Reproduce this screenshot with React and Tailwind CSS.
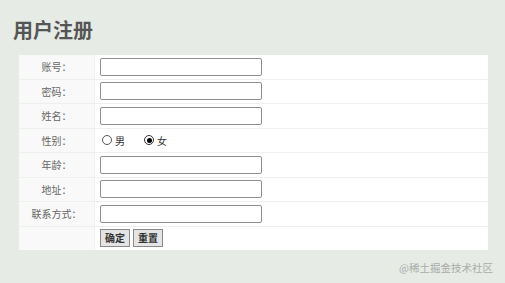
export default function App() {
  const fields = [
    { label: '账号：', type: 'text' },
    { label: '密码：', type: 'password' },
    { label: '姓名：', type: 'text' },
    { label: '性别：', type: 'radio' },
    { label: '年龄：', type: 'text' },
    { label: '地址：', type: 'text' },
    { label: '联系方式：', type: 'text' },
  ];

  return (
    <div
      className="w-[505px] h-[283px] bg-[#e6ebe5] relative overflow-hidden"
      style={{ fontFamily: '"Noto Sans CJK SC", "Noto Sans", sans-serif' }}
    >
      <h1 className="pl-[13px] pt-[17px] text-[20px] leading-[26px] font-bold text-[#555]">用户注册</h1>

      <div className="ml-[19px] mt-[12px] w-[469px] grid grid-cols-[75px_1fr] gap-[1px] bg-[#eef0ee]">
        {fields.map((f, i) => (
          <div key={i} className="contents">
            <div className="h-[23.5px] bg-[#f8f9f8] flex items-center justify-center text-[10px] text-[#666]">
              {f.label}
            </div>
            <div className="h-[23.5px] bg-white flex items-center pl-[5px]">
              {f.type === 'radio' ? (
                <div className="flex items-center text-[10px] text-[#333]">
                  <span className="w-[10px] h-[10px] rounded-full border border-[#555] bg-white ml-[2px]" />
                  <span className="ml-[3px]">男</span>
                  <span className="w-[10px] h-[10px] rounded-full border border-[#333] bg-white ml-[19px] flex items-center justify-center">
                    <span className="w-[5px] h-[5px] rounded-full bg-black" />
                  </span>
                  <span className="ml-[3px]">女</span>
                </div>
              ) : (
                <input
                  type={f.type}
                  className="w-[162px] h-[18px] border border-[#8f8f8f] rounded-[2px] bg-white outline-none"
                />
              )}
            </div>
          </div>
        ))}
        <div className="h-[23.5px] bg-[#f8f9f8]" />
        <div className="h-[23.5px] bg-white flex items-center pl-[5px] gap-[3px]">
          <button className="w-[30px] h-[18px] bg-[#e4e4e4] border border-[#8a8a8a] text-[10px] font-bold text-[#333] leading-none">确定</button>
          <button className="w-[30px] h-[18px] bg-[#e4e4e4] border border-[#8a8a8a] text-[10px] font-bold text-[#333] leading-none">重置</button>
        </div>
      </div>

      <div className="absolute right-[12px] top-[260px] text-[10.5px] text-[#a9aca9]">@稀土掘金技术社区</div>
    </div>
  );
}
